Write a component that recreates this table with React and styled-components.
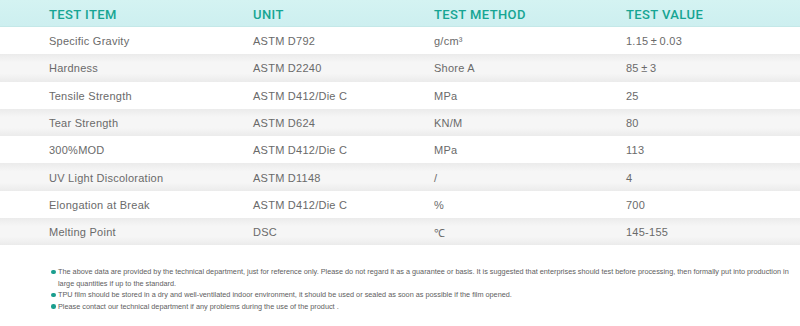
import styled, { createGlobalStyle } from 'styled-components';

const GlobalStyle = createGlobalStyle`
  html, body {
    margin: 0;
    padding: 0;
    background: #ffffff;
  }
`

const rows = [
  ['Specific Gravity', 'ASTM D792', 'g/cm³', '1.15\u2009±\u20090.03'],
  ['Hardness', 'ASTM D2240', 'Shore A', '85\u2009±\u20093'],
  ['Tensile Strength', 'ASTM D412/Die C', 'MPa', '25'],
  ['Tear Strength', 'ASTM D624', 'KN/M', '80'],
  ['300%MOD', 'ASTM D412/Die C', 'MPa', '113'],
  ['UV Light Discoloration', 'ASTM D1148', '/', '4'],
  ['Elongation at Break', 'ASTM D412/Die C', '%', '700'],
  ['Melting Point', 'DSC', '℃', '145-155'],
]

const notes = [
  'The above data are provided by the technical department, just for reference only. Please do not regard it as a guarantee or basis. It is suggested that enterprises should test before processing, then formally put into production in large quantities if up to the standard.',
  'TPU film should be stored in a dry and well-ventilated indoor environment, it should be used or sealed as soon as possible if the film opened.',
  'Please contact our technical department if any problems during the use of the product .',
]

export default function App() {
  return (
    <Page>
      <GlobalStyle />
      <Table>
        <HeadRow>
          <HeadCell>TEST ITEM</HeadCell>
          <HeadCell>UNIT</HeadCell>
          <HeadCell>TEST METHOD</HeadCell>
          <HeadCell>TEST VALUE</HeadCell>
        </HeadRow>
        {rows.map((r, i) => (
          <Row key={r[0]} $shaded={i % 2 === 1}>
            {r.map((c, j) => <Cell key={j}>{c}</Cell>)}
          </Row>
        ))}
      </Table>
      <Notes>
        {notes.map(n => <Note key={n}>{n}</Note>)}
      </Notes>
    </Page>
  );
}

const Page = styled.div`
  width: 800px;
  height: 326px;
  background: #ffffff;
  overflow: hidden;
`
const Table = styled.div`
  display: flex;
  flex-direction: column;
`
const HeadRow = styled.div`
  height: 27px;
  display: grid;
  grid-template-columns: 204px 181px 192px 1fr;
  align-items: center;
  padding-left: 49px;
  background: linear-gradient(to bottom, #d4f3f2, #cdeff0);
  border-bottom: 1px solid #c4e8e8;
  box-sizing: border-box;
`
const HeadCell = styled.div`
  font-family: 'Roboto', 'Liberation Sans', sans-serif;
  font-size: 13px;
  font-weight: 500;
  letter-spacing: 0.4px;
  color: #16a593;
  padding-top: 2px;
`
const Row = styled.div`
  height: 27.3px;
  display: grid;
  grid-template-columns: 204px 181px 192px 1fr;
  align-items: center;
  padding-left: 49px;
  background: ${p => p.$shaded
    ? 'linear-gradient(to bottom, #ebebeb 0%, #f6f6f6 30%, #f6f6f6 70%, #ebebeb 100%)'
    : '#ffffff'};
`
const Cell = styled.div`
  font-family: 'Liberation Sans', Arial, sans-serif;
  font-size: 11px;
  letter-spacing: 0.25px;
  color: #6a6a6a;
  white-space: nowrap;
  padding-top: 1px;
`
const Notes = styled.ul`
  list-style: none;
  margin: 0;
  padding: 21px 8px 0 58px;
`
const Note = styled.li`
  position: relative;
  font-family: 'Liberation Sans', Arial, sans-serif;
  font-size: 7.3px;
  line-height: 11.5px;
  color: #5e5e5e;
  &::before {
    content: '';
    position: absolute;
    left: -7px;
    top: 3.5px;
    width: 4.5px;
    height: 4.5px;
    border-radius: 50%;
    background: #1a9e8e;
  }
`
